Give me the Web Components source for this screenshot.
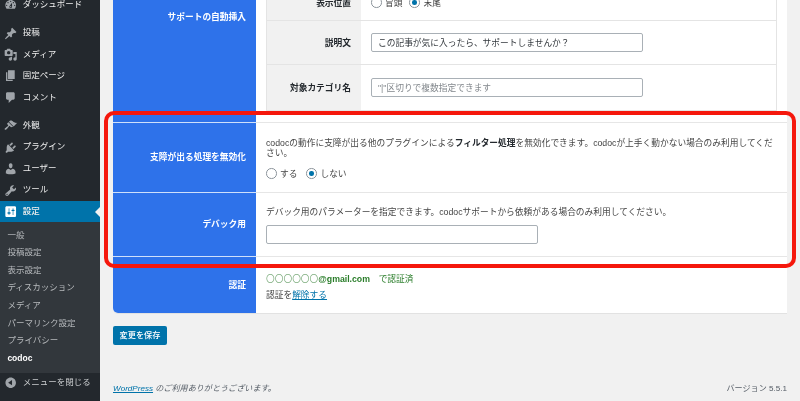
<!DOCTYPE html>
<html lang="ja">
<head>
<meta charset="utf-8">
<title>codoc</title>
<style>
    html, body { margin: 0; height: 401px; overflow: hidden; background: #f1f1f1; }
    body { display: flex; font: 8.72px/1.4 "Liberation Sans", "Noto Sans CJK JP", sans-serif; color: #444; position: relative; filter: blur(.3px); }
    b { color: #23282d; }
</style>
</head>
<body>
<wp-sidebar>
    <wp-menu-item icon="dashboard">ダッシュボード</wp-menu-item>
    <wp-menu-item icon="post" gap>投稿</wp-menu-item>
    <wp-menu-item icon="media">メディア</wp-menu-item>
    <wp-menu-item icon="page">固定ページ</wp-menu-item>
    <wp-menu-item icon="comment">コメント</wp-menu-item>
    <wp-menu-item icon="appearance" gap>外観</wp-menu-item>
    <wp-menu-item icon="plugin">プラグイン</wp-menu-item>
    <wp-menu-item icon="user">ユーザー</wp-menu-item>
    <wp-menu-item icon="tool">ツール</wp-menu-item>
    <wp-menu-item icon="settings" active>設定</wp-menu-item>
    <wp-submenu>
        <span>一般</span>
        <span>投稿設定</span>
        <span>表示設定</span>
        <span>ディスカッション</span>
        <span>メディア</span>
        <span>パーマリンク設定</span>
        <span>プライバシー</span>
        <span class="on">codoc</span>
    </wp-submenu>
    <wp-menu-item icon="collapse" muted>メニューを閉じる</wp-menu-item>
</wp-sidebar>

<wp-main>
    <settings-card>
        <settings-row label="サポートの自動挿入" height="210" class="cut">
            <inner-table>
                <inner-row label="表示位置" height="36">
                    <radio-group gap="7"><radio-opt>冒頭</radio-opt><radio-opt checked>末尾</radio-opt></radio-group>
                </inner-row>
                <inner-row label="説明文" height="44"><text-field value="この記事が気に入ったら、サポートしませんか？"></text-field></inner-row>
                <inner-row label="対象カテゴリ名" height="45"><text-field placeholder="&quot;|&quot;区切りで複数指定できます"></text-field></inner-row>
            </inner-table>
        </settings-row>
        <settings-row label="支障が出る処理を無効化" height="70">
            <div style="line-height:10px;margin:2px 0 10px">codocの動作に支障が出る他のプラグインによる<b>フィルター処理</b>を無効化できます。codocが上手く動かない場合のみ利用してくだ<br>さい。</div>
            <radio-group gap="9"><radio-opt>する</radio-opt><radio-opt checked>しない</radio-opt></radio-group>
        </settings-row>
        <settings-row label="デバック用" height="64">
            <div style="margin:0 0 7px;line-height:12px">デバック用のパラメーターを指定できます。codocサポートから依頼がある場合のみ利用してください。</div>
            <text-field></text-field>
        </settings-row>
        <settings-row label="認証" height="57" last>
            <div style="color:#2a7d2a;line-height:16px;padding-top:3px"><span style="color:#7fae7f">〇〇〇〇〇〇</span><strong>@gmail.com</strong>　で認証済</div>
            <div style="line-height:16px">認証を<a href="#" style="color:#0073aa">解除する</a></div>
        </settings-row>
    </settings-card>
    <save-button>変更を保存</save-button>
    <wp-footer>
        <span slot="left"><a href="#" style="color:#0073aa">WordPress</a> のご利用ありがとうございます。</span>
        <span slot="right">バージョン 5.5.1</span>
    </wp-footer>
</wp-main>

<red-frame></red-frame>

<script>
const ICONS = {
    dashboard: 'M3.76 16h12.48c1.1-1.37 1.76-3.11 1.76-5 0-4.42-3.58-8-8-8s-8 3.58-8 8c0 1.89.66 3.63 1.76 5zM10 4c.55 0 1 .45 1 1s-.45 1-1 1-1-.45-1-1 .45-1 1-1zM6 6c.55 0 1 .45 1 1s-.45 1-1 1-1-.45-1-1 .45-1 1-1zm8 0c.55 0 1 .45 1 1s-.45 1-1 1-1-.45-1-1 .45-1 1-1zm-5.37 5.55L12 7v6c0 1.1-.9 2-2 2s-2-.9-2-2c0-.57.24-1.08.63-1.45zM4 10c.55 0 1 .45 1 1s-.45 1-1 1-1-.45-1-1 .45-1 1-1zm12 0c.55 0 1 .45 1 1s-.45 1-1 1-1-.45-1-1 .45-1 1-1zm-5 3c0-.55-.45-1-1-1s-1 .45-1 1 .45 1 1 1 1-.45 1-1z',
    post: 'M10.44 3.02l1.82-1.82 6.36 6.35-1.83 1.82c-1.05-.68-2.48-.57-3.41.36l-.75.75c-.92.93-1.04 2.35-.35 3.41l-1.83 1.82-2.41-2.41-2.8 2.79c-.42.42-3.38 2.71-3.8 2.29s1.86-3.39 2.28-3.81l2.79-2.79L4.1 9.36l1.83-1.82c1.05.69 2.48.57 3.4-.36l.75-.75c.93-.92 1.05-2.35.36-3.41z',
    media: 'M13 11V4c0-.55-.45-1-1-1h-1.67L9 1H5L3.67 3H2c-.55 0-1 .45-1 1v7c0 .55.45 1 1 1h10c.55 0 1-.45 1-1zM7 4.5c1.38 0 2.5 1.12 2.5 2.5S8.38 9.5 7 9.5 4.5 8.38 4.5 7 5.62 4.5 7 4.5zM14 6h5v10.5c0 1.38-1.12 2.5-2.5 2.5S14 17.88 14 16.5s1.12-2.5 2.5-2.5c.17 0 .34.02.5.05V9h-3V6zm-4 8.05V13h2v3.5c0 1.38-1.12 2.5-2.5 2.5S7 17.88 7 16.5 8.12 14 9.5 14c.17 0 .34.02.5.05z',
    page: 'M6 15V2h10v13H6zm-1 1h8v2H3V5h2v11z',
    comment: 'M5 2h9c1.1 0 2 .9 2 2v7c0 1.1-.9 2-2 2h-2l-5 5v-5H5c-1.1 0-2-.9-2-2V4c0-1.1.9-2 2-2z',
    appearance: 'M14.48 11.06L7.41 3.99l1.5-1.5c.5-.56 2.3-.47 3.51.32 1.21.8 1.43 1.28 2.91 2.1 1.18.64 2.45 1.26 4.45.85zm-.71.71L6.7 4.7 4.93 6.47c-.39.39-.39 1.02 0 1.41l1.06 1.06c.39.39.39 1.03 0 1.42-.6.6-1.43 1.11-2.21 1.69-.35.26-.7.53-1.01.84C1.43 13.23.4 14.89 1.2 15.7c.8.8 2.46-.23 3.82-1.57.31-.31.58-.66.84-1.02.57-.78 1.08-1.61 1.69-2.21.39-.39 1.02-.39 1.41 0l1.06 1.06c.39.39 1.02.39 1.41 0z',
    plugin: 'M13.11 4.36L9.87 7.6 8 5.73l3.24-3.24c.35-.34 1.05-.2 1.56.32.52.51.66 1.21.31 1.55zm-8 1.77l.91-1.12 9.01 9.01-1.19.84c-.71.71-2.63 1.16-3.82 1.16H6.14L4.9 17.26c-.59.59-1.54.59-2.12 0-.59-.58-.59-1.53 0-2.12l1.24-1.24v-3.88c0-1.13.4-3.19 1.09-3.89zm7.26 3.97l3.24-3.24c.34-.35 1.04-.21 1.55.31.52.51.66 1.21.31 1.55l-3.24 3.25z',
    user: 'M10 9.25c-2.27 0-2.73-3.44-2.73-3.44C7 4.02 7.82 2 9.97 2c2.16 0 2.98 2.02 2.71 3.81 0 0-.41 3.44-2.68 3.44zm0 2.57L12.72 10c2.39 0 4.52 2.33 4.52 4.53v2.49s-3.65 1.13-7.24 1.13c-3.65 0-7.24-1.13-7.24-1.13v-2.49c0-2.25 1.94-4.48 4.47-4.48z',
    tool: 'M16.68 9.77c-1.34 1.34-3.3 1.67-4.95.99l-5.41 6.52c-.99.99-2.59.99-3.58 0s-.99-2.59 0-3.57l6.52-5.42c-.68-1.65-.35-3.61.99-4.95 1.28-1.28 3.12-1.62 4.72-1.06l-2.89 2.89 2.82 2.82 2.86-2.87c.53 1.58.18 3.39-1.08 4.65zM3.81 16.21c.4.39 1.04.39 1.43 0 .4-.4.4-1.04 0-1.43-.39-.4-1.03-.4-1.43 0-.39.39-.39 1.03 0 1.43z',
    settings: 'M18 16V4c0-1.1-.9-2-2-2H4c-1.1 0-2 .9-2 2v12c0 1.1.9 2 2 2h12c1.1 0 2-.9 2-2zM8 11h1c.55 0 1 .45 1 1s-.45 1-1 1H8v1.5c0 .28-.22.5-.5.5s-.5-.22-.5-.5V13H6c-.55 0-1-.45-1-1s.45-1 1-1h1V5.5c0-.28.22-.5.5-.5s.5.22.5.5V11zm5-2h-1c-.55 0-1-.45-1-1s.45-1 1-1h1V5.5c0-.28.22-.5.5-.5s.5.22.5.5V7h1c.55 0 1 .45 1 1s-.45 1-1 1h-1v5.5c0 .28-.22.5-.5.5s-.5-.22-.5-.5V9z',
    collapse: 'M10 2.16c4.33 0 7.84 3.51 7.84 7.84s-3.51 7.84-7.84 7.84S2.16 14.33 2.16 10 5.71 2.16 10 2.16zm2 11.72V6.12L6.18 9.97z'
};

// small helper so each element below is only its markup
function shadowElement(name, render) {
    customElements.define(name, class extends HTMLElement {
        constructor() {
            super();
            this.attachShadow({ mode: 'open' });
        }
        connectedCallback() {
            this.shadowRoot.innerHTML = render(this);
        }
    });
}

shadowElement('wp-sidebar', () => `
    <style>
        :host { display: block; width: 100px; flex: none; height: 401px; background: #23282d; overflow: hidden; }
        div { margin-top: -6px; display: flex; flex-direction: column; }
    </style>
    <div><slot></slot></div>`);

shadowElement('wp-menu-item', el => {
    const active = el.hasAttribute('active');
    const muted = el.hasAttribute('muted');
    return `
    <style>
        :host { display: flex; align-items: center; height: 21.4px; flex: none; color: ${muted ? '#c9ccce' : '#eee'};
            font-size: 8.5px; margin-top: ${el.hasAttribute('gap') ? '7.2px' : '0'}; position: relative;
            background: ${active ? '#0073aa' : 'transparent'}; font-weight: ${active ? 500 : 400}; }
        :host([muted]) { margin-top: 0; height: 21px; }
        svg { width: 13.4px; height: 13.4px; margin-left: 4.4px; margin-right: 5px; fill: ${active ? '#fff' : '#a0a5aa'}; flex: none; }
        i { position: absolute; right: 0; top: 50%; margin-top: -5px; border: 5px solid transparent; border-left: 0; border-right-color: #f1f1f1; }
    </style>
    <svg viewBox="0 0 20 20"><path d="${ICONS[el.getAttribute('icon')]}"/></svg>
    <slot></slot>${active ? '<i></i>' : ''}`;
});

shadowElement('wp-submenu', () => `
    <style>
        :host { display: flex; flex-direction: column; background: #32373c; padding: 4.4px 0 5.2px 7.4px; color: #b7babd; font-size: 8.5px; }
        ::slotted(span) { display: block; height: 17.6px; line-height: 17.6px; }
        ::slotted(.on) { color: #fff; font-weight: 700; }
    </style>
    <slot></slot>`);

shadowElement('wp-main', () => `
    <style>
        :host { display: flex; flex-direction: column; flex: 1; min-width: 0; padding: 0 13px; }
    </style>
    <slot></slot>`);

shadowElement('settings-card', () => `
    <style>
        :host { display: flex; flex-direction: column; margin-top: -88px; background: #fff; border-bottom: 1px solid #e2e2e2; border-radius: 0 0 0 5px; }
    </style>
    <slot></slot>`);

shadowElement('settings-row', el => `
    <style>
        :host { display: flex; height: ${el.getAttribute('height')}px; box-sizing: border-box; flex: none; }
        .head { width: 143px; flex: none; display: flex; align-items: center; justify-content: flex-end; box-sizing: border-box;
            padding-right: 10px; background: #2e72ea; color: #fff; font-weight: 700; border-top: 1px solid #cfe0fb;
            border-radius: ${el.hasAttribute('last') ? '0 0 0 5px' : '0'}; }
        .body { flex: 1; min-width: 0; display: flex; flex-direction: column; justify-content: center; align-items: flex-start; box-sizing: border-box; padding: 0 10px; border-top: 1px solid #e6e6e6; }
        :host(.cut) .head { border-top: 0; }
        :host(.cut) .body { border-top: 0; justify-content: flex-end; padding-bottom: 11px; }
    </style>
    <div class="head">${el.getAttribute('label')}</div>
    <div class="body"><slot></slot></div>`);

shadowElement('inner-table', () => `
    <style>
        :host { display: flex; flex-direction: column; align-self: stretch; border: 1px solid #e4e4e4; border-width: 0 1px 1px 1px; }
    </style>
    <slot></slot>`);

shadowElement('inner-row', el => `
    <style>
        :host { display: flex; height: ${el.getAttribute('height')}px; flex: none; box-sizing: border-box; border-bottom: 1px solid #e4e4e4; }
        :host(:last-child) { border-bottom: 0; }
        .k { width: 94px; flex: none; background: #f1f1f1; box-sizing: border-box; padding: 1px 10px 0 0; display: flex; align-items: center; justify-content: flex-end; font-weight: 700; color: #23282d; }
        .v { flex: 1; display: flex; align-items: center; padding-left: 10px; }
    </style>
    <div class="k">${el.getAttribute('label')}</div>
    <div class="v"><slot></slot></div>`);

shadowElement('radio-group', el => `
    <style>
        :host { display: flex; gap: ${el.getAttribute('gap') || 12}px; align-items: center; }
    </style>
    <slot></slot>`);

shadowElement('radio-opt', el => `
    <style>
        :host { display: inline-flex; align-items: center; gap: 3.5px; line-height: 12px; }
        i { width: 8.5px; height: 8.5px; flex: none; border: 1px solid #8c949b; border-radius: 50%; background: #fff; display: flex; align-items: center; justify-content: center; }
        i.on::after { content: ""; width: 4.5px; height: 4.5px; border-radius: 50%; background: #0073aa; }
    </style>
    <i class="${el.hasAttribute('checked') ? 'on' : ''}"></i><slot></slot>`);

shadowElement('text-field', el => `
    <style>
        :host { display: block; width: 272px; height: 19px; flex: none; }
        input { display: block; width: 100%; height: 100%; box-sizing: border-box; margin: 0; padding: 0 6px; border: 1px solid #a9b0b6; border-radius: 2px;
            background: #fff; font: inherit; color: #32373c; outline: 0; }
        input::placeholder { color: #82878c; opacity: 1; }
    </style>
    <input type="text" value="${el.getAttribute('value') || ''}" placeholder="${(el.getAttribute('placeholder') || '').replace(/"/g, '&quot;')}">`);

shadowElement('save-button', () => `
    <style>
        :host { display: flex; align-items: center; justify-content: center; width: 54px; height: 19px; margin-top: 12px; flex: none; background: #0073aa; border-radius: 2px; color: #fff; font-weight: 500; font-size: 8.2px; }
    </style>
    <slot></slot>`);

shadowElement('wp-footer', () => `
    <style>
        :host { display: flex; justify-content: space-between; align-items: center; margin-top: 37px; height: 14px; color: #555d66; font-size: 8.1px; }
        .l { font-style: italic; }
    </style>
    <span class="l"><slot name="left"></slot></span><slot name="right"></slot>`);

// the annotation drawn over the screenshot
shadowElement('red-frame', () => `
    <style>
        :host { position: absolute; left: 103.5px; top: 111px; width: 692.5px; height: 157px; box-sizing: border-box; border: 4.5px solid #f5170c; border-radius: 10px; pointer-events: none; }
    </style>`);
</script>
</body>
</html>
